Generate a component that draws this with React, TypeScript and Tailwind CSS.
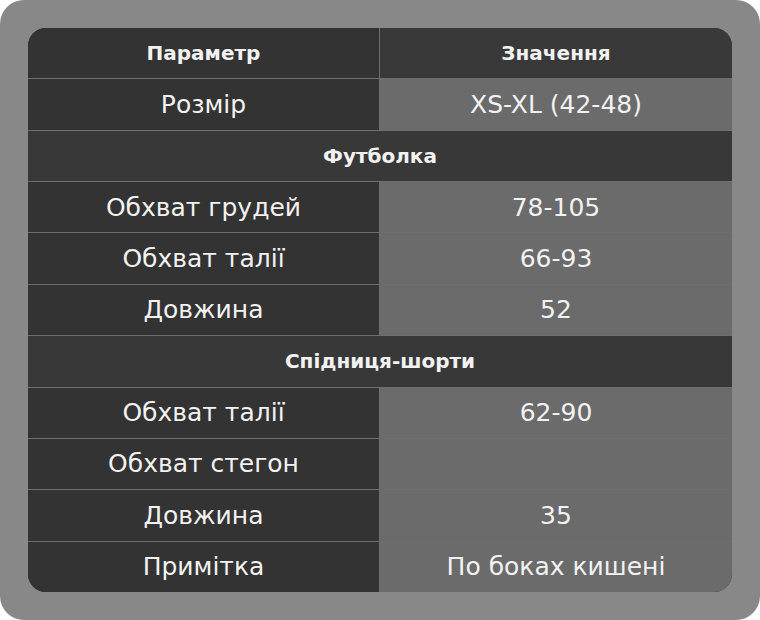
const rows: { kind: "head" | "row" | "section"; a: string; b?: string }[] = [
  { kind: "head", a: "Параметр", b: "Значення" },
  { kind: "row", a: "Розмір", b: "XS-XL (42-48)" },
  { kind: "section", a: "Футболка" },
  { kind: "row", a: "Обхват грудей", b: "78-105" },
  { kind: "row", a: "Обхват талії", b: "66-93" },
  { kind: "row", a: "Довжина", b: "52" },
  { kind: "section", a: "Спідниця-шорти" },
  { kind: "row", a: "Обхват талії", b: "62-90" },
  { kind: "row", a: "Обхват стегон", b: "" },
  { kind: "row", a: "Довжина", b: "35" },
  { kind: "row", a: "Примітка", b: "По боках кишені" },
];

export default function App() {
  return (
    <div className="w-[760px] h-[620px] bg-[#888888] rounded-[24px] p-[28px] font-['DejaVu_Sans',sans-serif] text-[#f2f2f2]">
      <div className="h-full flex flex-col rounded-[18px] overflow-hidden bg-[#333333]">
        {rows.map((r, i) => {
          const border = i > 0 ? "border-t border-[#6e6e6e]" : "";
          if (r.kind === "section") {
            return (
              <div key={i} className={`flex-1 flex items-center justify-center bg-[#383838] text-[20px] font-semibold ${border}`}>
                {r.a}
              </div>
            );
          }
          const head = r.kind === "head";
          return (
            <div key={i} className={`flex-1 grid grid-cols-[351px_1fr] ${border}`}>
              <div className={`flex items-center justify-center bg-[#333333] ${head ? "text-[20px] font-semibold" : "text-[25px]"}`}>
                {r.a}
              </div>
              <div className={`flex items-center justify-center border-l border-[#6e6e6e] ${head ? "bg-[#393939] text-[20px] font-semibold" : "bg-[#6b6b6b] text-[25px]"}`}>
                {r.b}
              </div>
            </div>
          );
        })}
      </div>
    </div>
  );
}
